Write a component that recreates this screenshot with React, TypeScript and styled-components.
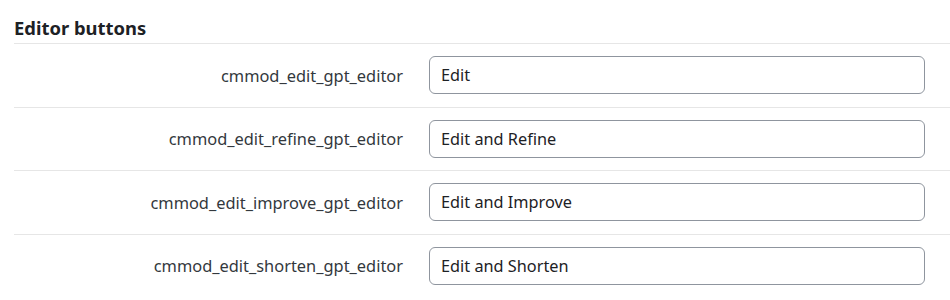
import React from "react";
import styled, { createGlobalStyle } from "styled-components";

const GlobalStyle = createGlobalStyle`
  body {
    margin: 0;
    background: #fff;
    font-family: "Noto Sans", "Open Sans", sans-serif;
    color: #1d2125;
  }
`;

const Section = styled.div`
  padding: 14px 0 0 14px;
  width: 936px;
`;

const Heading = styled.h3`
  margin: 0;
  font-size: 18.4px;
  font-weight: 700;
  line-height: 28px;
  padding-bottom: 1px;
  border-bottom: 1px solid #e6e6e6;
`;

const Row = styled.div`
  display: grid;
  grid-template-columns: 389px 496px;
  column-gap: 26px;
  align-items: center;
  padding: 12px 0 12.5px;

  & + & {
    border-top: 1px solid #e6e6e6;
  }
`;

const Label = styled.label`
  text-align: right;
  font-size: 16.4px;
  color: #33383d;
`;

const Field = styled.input`
  box-sizing: border-box;
  height: 38px;
  width: 100%;
  border: 1px solid #8f959e;
  border-radius: 6px;
  padding: 0 11px;
  font-family: inherit;
  font-size: 16.3px;
  color: #1d2125;
  background: #fff;
  outline: none;
`;

const items = [
  { name: "cmmod_edit_gpt_editor", value: "Edit" },
  { name: "cmmod_edit_refine_gpt_editor", value: "Edit and Refine" },
  { name: "cmmod_edit_improve_gpt_editor", value: "Edit and Improve" },
  { name: "cmmod_edit_shorten_gpt_editor", value: "Edit and Shorten" },
];

export default function App() {
  return (
    <>
      <GlobalStyle />
      <Section>
        <Heading>Editor buttons</Heading>
        {items.map((it) => (
          <Row key={it.name}>
            <Label htmlFor={it.name}>{it.name}</Label>
            <Field id={it.name} defaultValue={it.value} />
          </Row>
        ))}
      </Section>
    </>
  );
}
